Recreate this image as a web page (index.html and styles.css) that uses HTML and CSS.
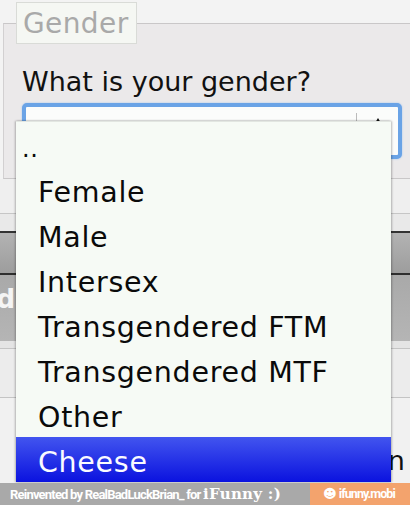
FILE: index.html
```html
<!DOCTYPE html>
<html>
<head>
<meta charset="utf-8">
<link rel="stylesheet" href="styles.css">
</head>
<body>
<div class="page">
  <fieldset class="gender">
    <legend class="legend">Gender</legend>
    <div class="question">What is your gender?</div>
    <div class="select">
      <div class="select-value"></div>
      <div class="select-sep"></div>
      <div class="select-arrows">
        <svg width="10" height="8" viewBox="0 0 10 8"><path d="M5 1 L8 6 L2 6 Z" fill="#111"/></svg>
      </div>
    </div>
  </fieldset>
  <div class="below">
    <div class="row-light"></div>
    <div class="row-light2"></div>
    <div class="bar-dark"></div>
    <div class="panel-grey"><div class="btn-clip"><span class="btn-text">Build</span></div></div>
    <div class="row-light3"></div>
    <div class="row-light4"></div>
    <div class="row-text"><span class="peek">n t</span></div>
  </div>

  <div class="dropdown">
    <div class="opt opt-dots">..</div>
    <div class="opt">Female</div>
    <div class="opt">Male</div>
    <div class="opt">Intersex</div>
    <div class="opt">Transgendered FTM</div>
    <div class="opt">Transgendered MTF</div>
    <div class="opt">Other</div>
    <div class="opt opt-sel">Cheese</div>
  </div>

  <div class="footer">
    <div class="credit">Reinvented by RealBadLuckBrian_ for <span class="brand">iFunny :)</span></div>
    <div class="site"><span class="smiley">&#9787;</span> ifunny.mobi</div>
  </div>
</div>
</body>
</html>
```

FILE: styles.css
```css
html, body {
  margin: 0;
  padding: 0;
}
body {
  width: 410px;
  height: 505px;
  overflow: hidden;
  background: #f3f3f3;
  font-family: "DejaVu Sans", Verdana, sans-serif;
}
.page {
  position: relative;
  width: 410px;
  height: 505px;
  overflow: hidden;
  display: flex;
  flex-direction: column;
}
.gender {
  flex: none;
  margin: 2px 0 0 3px;
  padding: 0 0 0 12px;
  border: none;
  border-top: 1px solid #c9c7c8;
  border-left: 1px solid #d2d0d1;
  border-bottom: 1px solid #c9c7c8;
  background: #ebe9ea;
  height: 177px;
  box-sizing: border-box;
  min-width: 0;
}
.legend {
  padding: 6px 7px 4px 6px;
  background: #f5f7f3;
  border: 1px solid #d9dbd7;
  color: #a9a9a9;
  font-size: 28px;
  line-height: 30px;
  letter-spacing: 0.4px;
}
.question {
  margin: 23px 0 0 6px;
  font-size: 27px;
  line-height: 30px;
  color: #111;
}
.select {
  margin: 6px 0 0 6px;
  width: 380px;
  height: 56px;
  box-sizing: border-box;
  border: 4px solid #6aa3e6;
  border-radius: 5px;
  background: #fbfcfb;
  box-shadow: 0 0 2px #9cc3ef;
  display: flex;
  align-items: flex-start;
}
.select-value { flex: 1; }
.select-sep {
  width: 1px;
  height: 30px;
  margin-top: 6px;
  background: #bbbbbb;
}
.select-arrows {
  width: 41px;
  display: flex;
  justify-content: center;
  padding-top: 10px;
}
.below {
  display: flex;
  flex-direction: column;
  background: #ededed;
  flex: 1;
}
.below > div { flex: none; }
.row-light {
  height: 34px;
  border-bottom: 1px solid #c6c6c6;
  background: #efefef;
}
.row-light2 {
  height: 17px;
  border-bottom: 2px solid #333;
  background: #e9e9e9;
}
.bar-dark {
  height: 40px;
  background: linear-gradient(#b3b3b3, #9d9d9d);
  border-bottom: 2px solid #2e2e2e;
}
.panel-grey {
  height: 66px;
  box-sizing: border-box;
  padding-top: 9px;
  background: linear-gradient(#a9a9a9, #b5b5b5);
  display: flex;
  align-items: flex-start;
  overflow: hidden;
}
.btn-clip {
  width: 15px;
  display: flex;
  justify-content: flex-end;
}
.btn-text {
  color: #f4f4f4;
  font-weight: bold;
  font-size: 26px;
  line-height: 30px;
  white-space: nowrap;
}
.row-light3 {
  height: 7px;
  background: #e4e4e4;
  border-bottom: 1px solid #c4c4c4;
}
.row-light4 {
  height: 48px;
  background: #ececec;
  border-bottom: 1px solid #c4c4c4;
}
.row-text {
  flex: 1 !important;
  background: #f1f1f1;
  display: flex;
  justify-content: flex-end;
  padding-top: 48px;
}
.peek {
  font-size: 27px;
  line-height: 30px;
  color: #111;
  margin-right: -14px;
}

.dropdown {
  position: absolute;
  left: 16px;
  top: 121px;
  width: 375px;
  height: 361px;
  box-sizing: border-box;
  background: #f6faf5;
  border-top: 1px solid #e2e6e1;
  box-shadow: -1px 0 2px rgba(0,0,0,0.25), 1px 0 2px rgba(0,0,0,0.25);
  display: flex;
  flex-direction: column;
}
.opt {
  height: 45px;
  flex: none;
  box-sizing: border-box;
  padding: 6px 0 0 22px;
  font-size: 28.5px;
  line-height: 39px;
  letter-spacing: 0.7px;
  color: #0a0a0a;
  white-space: nowrap;
}
.opt-dots {
  padding: 8px 0 0 6px;
  font-size: 24px;
  line-height: 39px;
}
.opt-sel {
  background: linear-gradient(#4255ef, #0b12df);
  color: #fafaff;
}

.footer {
  position: absolute;
  left: 0;
  right: 0;
  bottom: 0;
  height: 22px;
  display: flex;
  font-family: Roboto, "Liberation Sans", sans-serif;
  font-weight: bold;
  color: #fff;
  font-size: 13px;
}
.credit {
  width: 310px;
  background: #a9a9a9;
  padding-left: 10px;
  line-height: 22px;
  letter-spacing: -0.8px;
  white-space: nowrap;
  box-sizing: border-box;
}
.brand {
  font-family: "DejaVu Serif", "Liberation Serif", serif;
  font-size: 15px;
  letter-spacing: 0.3px;
}
.site {
  flex: 1;
  background: #f3a36d;
  line-height: 22px;
  padding-left: 13px;
  font-size: 12.5px;
  letter-spacing: -0.9px;
  white-space: nowrap;
}
.smiley {
  font-family: "DejaVu Sans", sans-serif;
  font-size: 13px;
  letter-spacing: 0;
}
```
